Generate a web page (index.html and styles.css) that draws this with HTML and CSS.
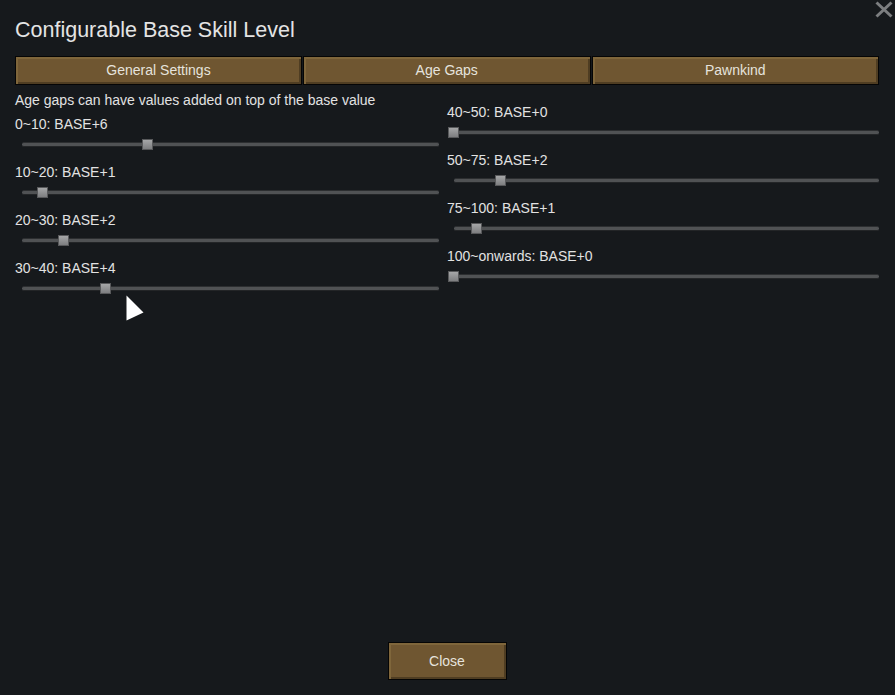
FILE: index.html
```html
<!DOCTYPE html>
<html>
<head>
<meta charset="utf-8">
<link rel="stylesheet" href="styles.css">
</head>
<body>
<div class="window">
  <button class="close-x" aria-label="Close">
    <svg width="18" height="17" viewBox="0 0 18 17"><path d="M1.5 1.5 L16.5 15.5 M16.5 1.5 L1.5 15.5" stroke="#7c7e80" stroke-width="3" fill="none"/></svg>
  </button>
  <h1 class="title">Configurable Base Skill Level</h1>
  <div class="tabs">
    <div class="tab">General Settings</div>
    <div class="tab">Age Gaps</div>
    <div class="tab">Pawnkind</div>
  </div>
  <div class="columns">
    <div class="col col-left">
      <div class="desc">Age gaps can have values added on top of the base value</div>
      <div class="row"><div class="label">0~10: BASE+6</div><div class="slider"><div class="track"><div class="knob" style="left:120px"></div></div></div></div>
      <div class="row"><div class="label">10~20: BASE+1</div><div class="slider"><div class="track"><div class="knob" style="left:15px"></div></div></div></div>
      <div class="row"><div class="label">20~30: BASE+2</div><div class="slider"><div class="track"><div class="knob" style="left:36px"></div></div></div></div>
      <div class="row"><div class="label">30~40: BASE+4</div><div class="slider"><div class="track"><div class="knob" style="left:78px"></div></div></div></div>
    </div>
    <div class="col col-right">
      <div class="row"><div class="label">40~50: BASE+0</div><div class="slider"><div class="track"><div class="knob" style="left:-6px"></div></div></div></div>
      <div class="row"><div class="label">50~75: BASE+2</div><div class="slider"><div class="track"><div class="knob" style="left:41px"></div></div></div></div>
      <div class="row"><div class="label">75~100: BASE+1</div><div class="slider"><div class="track"><div class="knob" style="left:17px"></div></div></div></div>
      <div class="row"><div class="label">100~onwards: BASE+0</div><div class="slider"><div class="track"><div class="knob" style="left:-6px"></div></div></div></div>
    </div>
  </div>
  <div class="footer">
    <div class="btn">Close</div>
  </div>
  <svg class="cursor" width="19" height="27" viewBox="0 0 19 27"><polygon points="0.5,0.5 17.5,17.5 0.5,25.5" fill="#ffffff"/></svg>
</div>
</body>
</html>
```
FILE: styles.css
```css
* { box-sizing: border-box; }
html, body { margin: 0; padding: 0; }
body {
  background: #16191c;
  font-family: "Liberation Sans", Arial, sans-serif;
  color: #e2e2e2;
}
.window {
  position: relative;
  width: 895px;
  height: 695px;
  padding: 0 16px 0 15px;
  display: flex;
  flex-direction: column;
}
.close-x {
  position: absolute;
  top: 1px;
  right: 2px;
  width: 18px;
  height: 17px;
  padding: 0;
  border: 0;
  background: none;
}
.close-x svg { display: block; }
.title {
  margin: 0;
  padding-top: 18px;
  height: 56px;
  font-size: 21.5px;
  line-height: 24px;
  font-weight: normal;
  color: #e4e4e4;
}
.tabs {
  display: flex;
  width: 864px;
  height: 29px;
}
.tab {
  flex: 1;
  border: 1px solid #050505;
  background: #6f5631;
  box-shadow: inset 2px 2px 0 #7f663b, inset -2px -2px 0 #4f3d22;
  color: #e6e3dd;
  font-size: 14px;
  line-height: 26px;
  text-align: center;
}
.tab + .tab { margin-left: 1px; }
.tab:first-child { flex: 0 0 287px; }
.columns {
  display: grid;
  grid-template-columns: 432px 432px;
  margin-top: 5px;
}
.col-right { padding-top: 13px; }
.desc {
  font-size: 14px;
  line-height: 20px;
  margin-bottom: 5px;
}
.row { height: 48px; }
.label {
  font-size: 14px;
  line-height: 19px;
  height: 18px;
}
.slider {
  height: 30px;
  padding: 9px 8px 0 7px;
}
.col-right .slider { padding-right: 0; }
.track {
  position: relative;
  height: 5px;
  background: #505254;
  border-top: 1px solid #2c2e30;
  border-bottom: 1px solid #232527;
  border-radius: 2px;
}
.knob {
  position: absolute;
  top: -4px;
  width: 11px;
  height: 11px;
  background: linear-gradient(#a6a7a8, #7d7e80);
  border: 1px solid #58595b;
}
.footer {
  margin-top: auto;
  height: 53px;
  display: flex;
  justify-content: center;
}
.btn {
  width: 119px;
  height: 38px;
  border: 1px solid #050505;
  background: #6f5631;
  box-shadow: inset 2px 2px 0 #7f663b, inset -2px -2px 0 #4f3d22;
  color: #e6e3dd;
  font-size: 14px;
  line-height: 36px;
  text-align: center;
}
.cursor {
  position: absolute;
  left: 126px;
  top: 295px;
}
```
